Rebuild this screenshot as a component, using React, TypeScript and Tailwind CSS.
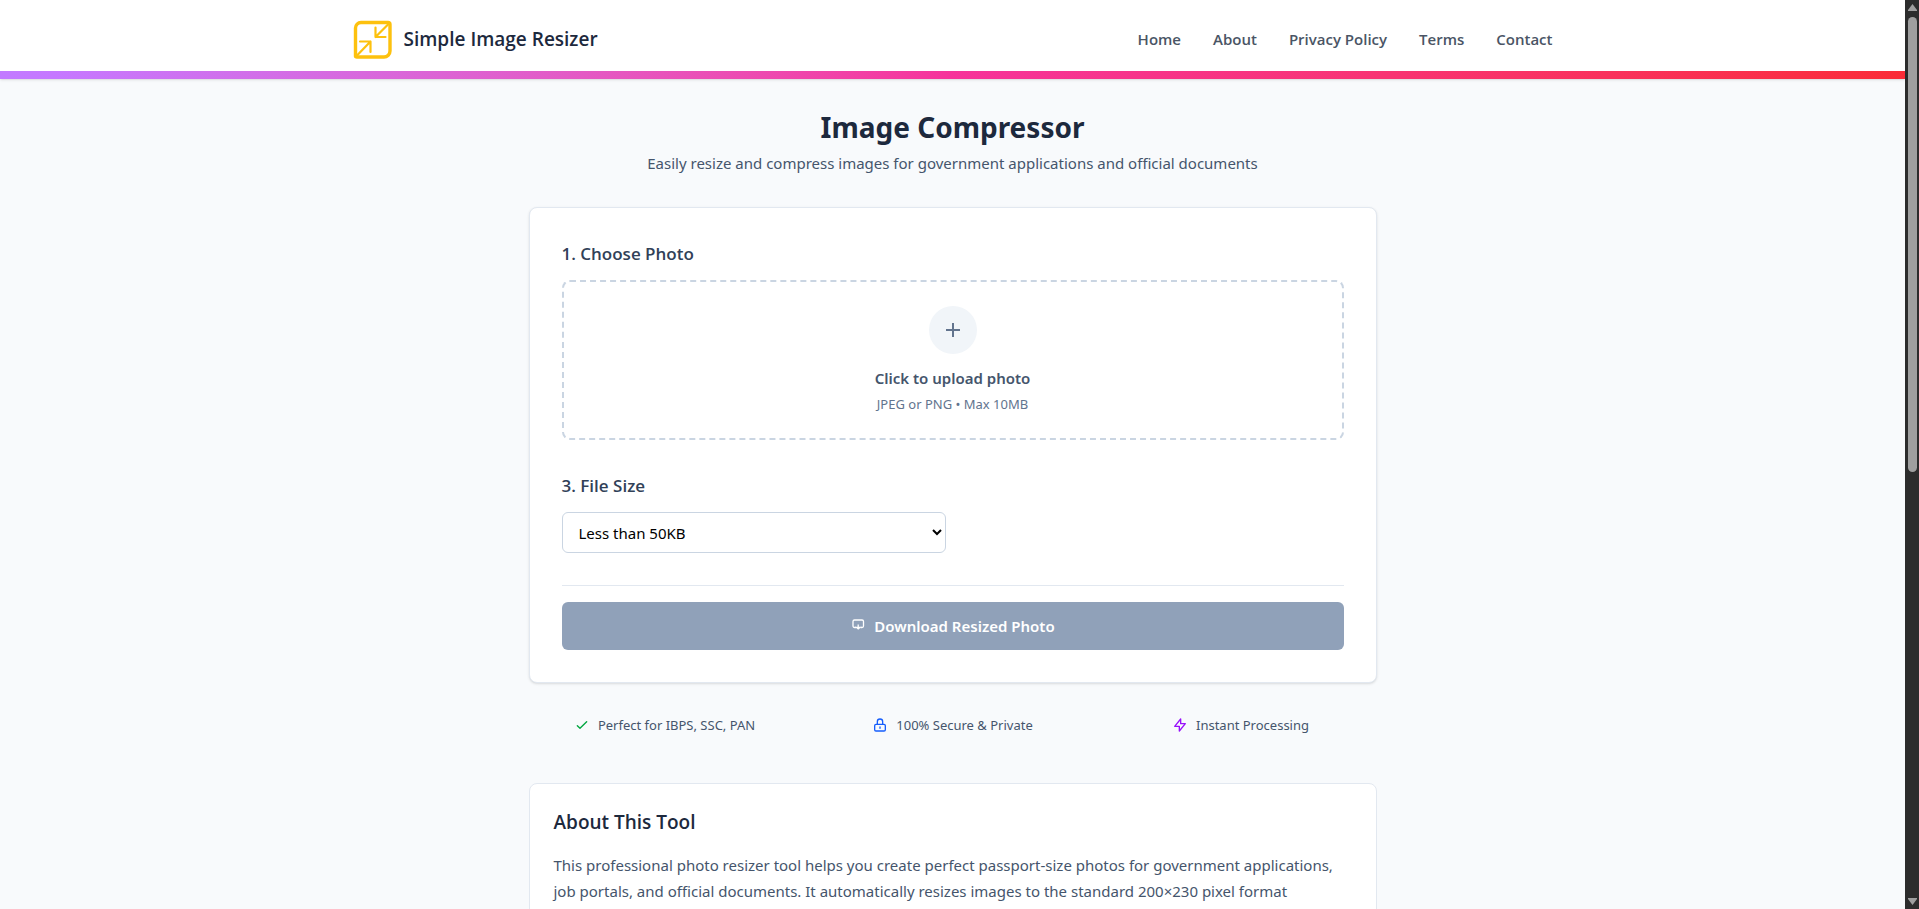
import { useRef, useState } from 'react'

const NAV_LINKS = ['Home', 'About', 'Privacy Policy', 'Terms', 'Contact']

const SIZE_OPTIONS = [{ value: '50', label: 'Less than 50KB' }]

function Logo() {
  return (
    <svg viewBox="0 0 39 39" className="h-[39px] w-[39px]" fill="none" stroke="#fdc10e" aria-hidden="true">
      <path d="M2.500 36.500V8a5.500 5.500 0 0 1 5.500-5.500h27a2 2 0 0 1 2 2V31a6 6 0 0 1-6 6H4a1.500 1.500 0 0 1-1.500-1.500Z" strokeWidth="3.4" strokeLinejoin="round" />
      <path
        d="M36 3.500 22.500 17M22.500 7.500v9.500h10M3.500 36 17.500 21.500M7 21.500h10.500v10.500"
        strokeWidth="2.2"
        strokeLinecap="round"
        strokeLinejoin="round"
      />
    </svg>
  )
}

function Header() {
  return (
    <header className="bg-white font-['Open_Sans',sans-serif] shadow-sm">
      <div className="mx-auto flex max-w-7xl items-center justify-between px-10 pt-5 pb-3">
        <a href="#" className="flex items-center gap-3">
          <Logo />
          <span className="text-[19px] font-semibold text-slate-800">Simple Image Resizer</span>
        </a>
        <nav className="flex items-center gap-8">
          {NAV_LINKS.map((label) => (
            <a key={label} href="#" className="text-[15px] font-semibold text-gray-600 hover:text-gray-900">
              {label}
            </a>
          ))}
        </nav>
      </div>
      <div className="h-2 bg-linear-to-r from-purple-400 via-pink-500 to-red-500" />
    </header>
  )
}

function Features() {
  return (
    <ul className="mt-8 grid grid-cols-3 gap-4 text-[13px] leading-5 text-slate-600">
      <li className="flex items-center justify-center gap-2">
        <svg viewBox="0 0 24 24" className="h-4 w-4 text-green-600" fill="none" stroke="currentColor" strokeWidth="2" strokeLinecap="round" strokeLinejoin="round">
          <path d="M5 13l4 4L19 7" />
        </svg>
        Perfect for IBPS, SSC, PAN
      </li>
      <li className="flex items-center justify-center gap-2">
        <svg viewBox="0 0 24 24" className="h-4 w-4 text-blue-600" fill="none" stroke="currentColor" strokeWidth="2" strokeLinecap="round" strokeLinejoin="round">
          <path d="M12 15v2m-6 4h12a2 2 0 002-2v-6a2 2 0 00-2-2H6a2 2 0 00-2 2v6a2 2 0 002 2zm10-10V7a4 4 0 00-8 0v4h8z" />
        </svg>
        100% Secure &amp; Private
      </li>
      <li className="flex items-center justify-center gap-2">
        <svg viewBox="0 0 24 24" className="h-4 w-4 text-purple-600" fill="none" stroke="currentColor" strokeWidth="2" strokeLinecap="round" strokeLinejoin="round">
          <path d="M13 10V3L4 14h7v7l9-11h-7z" />
        </svg>
        Instant Processing
      </li>
    </ul>
  )
}

function ScrollRail() {
  return (
    <div className="flex w-[14px] shrink-0 flex-col items-center bg-[#2c2c2c] py-1" aria-hidden="true">
      <svg viewBox="0 0 9 7" className="h-[7px] w-[9px]" fill="#9f9f9f">
        <path d="M4.500 0 9 6v1H0V6Z" />
      </svg>
      <div className="flex w-full flex-1 justify-center py-1.5">
        <div className="h-[52%] w-[9px] rounded-full bg-[#9f9f9f]" />
      </div>
      <svg viewBox="0 0 9 7" className="h-[7px] w-[9px]" fill="#9f9f9f">
        <path d="M4.500 7 0 1V0h9v1Z" />
      </svg>
    </div>
  )
}

export default function App() {
  const fileRef = useRef<HTMLInputElement>(null)
  const [file, setFile] = useState<File | null>(null)
  const [size, setSize] = useState('50')

  return (
    <div className="flex h-screen overflow-hidden bg-slate-50 font-['Noto_Sans',sans-serif]">
      <div className="min-w-0 flex-1 overflow-hidden">
        <Header />

        <main className="mx-auto max-w-4xl px-6 pt-7">
          <div className="mb-8 text-center">
            <h1 className="mb-1 text-[28px] leading-10 font-bold text-slate-800">Image Compressor</h1>
            <p className="text-[15px] leading-6 text-slate-600">
              Easily resize and compress images for government applications and official documents
            </p>
          </div>

          <section className="space-y-8 rounded-lg border border-slate-200 bg-white p-8 shadow-sm">
            <div>
              <h2 className="mb-3 font-['Open_Sans',sans-serif] text-[17px] leading-7 font-semibold text-slate-700">
                1. Choose Photo
              </h2>
              <button
                type="button"
                onClick={() => fileRef.current?.click()}
                className="flex w-full flex-col items-center rounded-lg border-2 border-dashed border-slate-300 p-6 hover:border-slate-400"
              >
                <span className="mb-3 flex h-12 w-12 items-center justify-center rounded-full bg-slate-100">
                  <svg viewBox="0 0 24 24" className="h-6 w-6 text-slate-500" fill="none" stroke="currentColor" strokeWidth="2">
                    <path d="M12 5v14M5 12h14" />
                  </svg>
                </span>
                <span className="mb-1 text-[15px] leading-6 font-semibold text-slate-600">Click to upload photo</span>
                <span className="text-[13px] leading-5 text-slate-500">JPEG or PNG • Max 10MB</span>
              </button>
              <input
                ref={fileRef}
                type="file"
                accept="image/jpeg,image/png"
                aria-label="Photo"
                className="hidden"
                onChange={(e) => setFile(e.target.files?.[0] ?? null)}
              />
            </div>

            <div>
              <label
                htmlFor="file-size"
                className="mb-3 block font-['Open_Sans',sans-serif] text-[17px] leading-7 font-semibold text-slate-700"
              >
                3. File Size
              </label>
              <select
                id="file-size"
                value={size}
                onChange={(e) => setSize(e.target.value)}
                className="block h-[41px] w-full max-w-sm rounded-md border border-slate-300 bg-white px-3 text-[15px] text-black"
              >
                {SIZE_OPTIONS.map((o) => (
                  <option key={o.value} value={o.value}>
                    {o.label}
                  </option>
                ))}
              </select>
            </div>

            <div className="border-t border-slate-200 pt-4">
              <button
                type="button"
                disabled={!file}
                className="flex h-12 w-full items-center justify-center gap-2 rounded-md bg-slate-600 text-[15px] font-semibold text-white disabled:bg-[#90a1b9]"
              >
                <svg viewBox="0 0 16 16" className="h-4 w-4" fill="none" stroke="currentColor" strokeWidth="1.3">
                  <path d="M6 9.500H4.500A1.500 1.500 0 0 1 3 8V3.500A1.500 1.500 0 0 1 4.500 2h7.500a1.500 1.500 0 0 1 1.500 1.500V8A1.500 1.500 0 0 1 12 9.500h-1.500" />
                  <path d="M8.200 6.500v3M6.500 9.500h3.500L8.200 11Z" />
                </svg>
                Download Resized Photo
              </button>
            </div>
          </section>

          <Features />

          <section className="mt-12 rounded-lg border border-slate-200 bg-white p-6 pb-12">
            <h2 className="mb-4 font-['Open_Sans',sans-serif] text-[19px] leading-7 font-semibold text-slate-800">
              About This Tool
            </h2>
            <p className="text-[15px] leading-[26px] text-slate-600">
              This professional photo resizer tool helps you create perfect passport-size photos for government
              applications, job portals, and official documents. It automatically resizes images to the standard 200×230
              pixel format
            </p>
          </section>
        </main>
      </div>
      <ScrollRail />
    </div>
  )
}
